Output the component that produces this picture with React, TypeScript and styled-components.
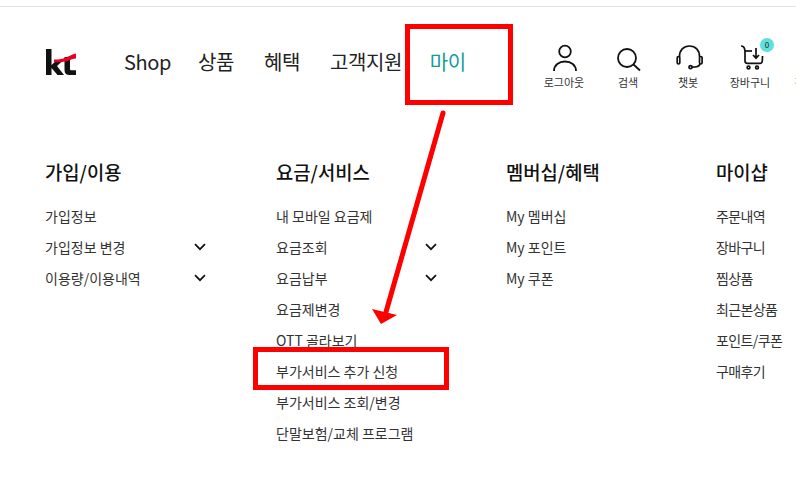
import React from "react";
import styled, { createGlobalStyle } from "styled-components";

const Global = createGlobalStyle`
  html, body { margin: 0; padding: 0; background: #fff; }
  body { font-family: "Noto Sans CJK KR", "Noto Sans", sans-serif; color: #222; }
  a { color: inherit; text-decoration: none; }
  ul { list-style: none; margin: 0; padding: 0; }
`;

const Page = styled.div`
  position: relative;
  width: 796px;
  height: 497px;
  overflow: hidden;
  background: #fff;
`;
const TopStrip = styled.div`
  height: 6px;
  border-bottom: 1px solid #e2e2e2;
`;
const Header = styled.header`
  display: flex;
  align-items: flex-start;
  height: 150px;
  padding-left: 45px;
  white-space: nowrap;
`;
const Logo = styled.svg`
  width: 32px;
  height: 26px;
  margin-top: 42px;
  flex: none;
`;
const Nav = styled.nav`
  display: flex;
  margin-left: 47px;
  margin-top: 36px;
`;
const NavLink = styled.a<{ $active?: boolean; $gap: number }>`
  font-size: 20px;
  line-height: 38px;
  font-weight: 400;
  letter-spacing: -0.4px;
  margin-right: ${(p) => p.$gap}px;
  color: ${(p) => (p.$active ? "#0f9e96" : "#222")};
`;
const Tools = styled.div`
  position: absolute;
  top: 42px;
  left: 534px;
  display: flex;
`;
const Tool = styled.a<{ $w: number }>`
  position: relative;
  width: ${(p) => p.$w}px;
  display: flex;
  flex-direction: column;
  align-items: center;
  flex: none;
  font-size: 11px;
  line-height: 16px;
  color: #333;
  svg { display: block; width: 32px; height: 32px; flex: none; }
`;
const IconSpacer = styled.span`
  height: 32px;
`;
const Badge = styled.span`
  position: absolute;
  top: -4px;
  left: 46px;
  width: 14px;
  height: 14px;
  border-radius: 50%;
  background: #5fe0dc;
  color: #222;
  font-size: 8px;
  line-height: 14px;
  text-align: center;
`;
const Menu = styled.main`
  display: grid;
  grid-template-columns: 231px 230px 210px 1fr;
  padding-left: 45px;
  white-space: nowrap;
`;
const Column = styled.section``;
const Heading = styled.h3`
  margin: 0 0 13px;
  font-size: 18.8px;
  line-height: 30px;
  font-weight: 500;
  color: #111;
`;
const Row = styled.li<{ $tight?: boolean }>`
  display: flex;
  align-items: center;
  justify-content: space-between;
  width: 161px;
  height: 31px;
  font-size: 14px;
  color: #333;
  letter-spacing: ${(p) => (p.$tight ? "-0.6px" : "0")};
`;
const Chevron = styled.svg`
  width: 12px;
  height: 8px;
  flex: none;
`;
const RedBox = styled.div<{ $l: number; $t: number; $w: number; $h: number }>`
  position: absolute;
  left: ${(p) => p.$l}px;
  top: ${(p) => p.$t}px;
  width: ${(p) => p.$w}px;
  height: ${(p) => p.$h}px;
  box-sizing: border-box;
  border: 5px solid #fe0000;
`;
const ArrowLayer = styled.svg`
  position: absolute;
  left: 0;
  top: 0;
  width: 796px;
  height: 497px;
  pointer-events: none;
`;

const Down = () => (
  <Chevron viewBox="0 0 12 8" fill="none" stroke="#111" strokeWidth="1.7">
    <path d="M1 1.2 6 6.2l5-5" />
  </Chevron>
);

const columns = [
  { title: "가입/이용", items: [["가입정보"], ["가입정보 변경", 1], ["이용량/이용내역", 1]] },
  {
    title: "요금/서비스",
    items: [
      ["내 모바일 요금제"], ["요금조회", 1], ["요금납부", 1], ["요금제변경"], ["OTT 골라보기"],
      ["부가서비스 추가 신청"], ["부가서비스 조회/변경"], ["단말보험/교체 프로그램"],
    ],
  },
  { title: "멤버십/혜택", items: [["My 멤버십"], ["My 포인트"], ["My 쿠폰"]] },
  { title: "마이샵", tight: true, items: [["주문내역"], ["장바구니"], ["찜상품"], ["최근본상품"], ["포인트/쿠폰"], ["구매후기"]] },
] as { title: string; tight?: boolean; items: [string, number?][] }[];

export default function App() {
  return (
    <Page>
      <Global />
      <TopStrip />
      <Header>
        <Logo viewBox="0 0 32 26">
          <path fill="#111" d="M1 0h5.500v16l5-4.500h6.500l-6 5.500 7 9h-6.500l-6-7V26H1z" />
          <path fill="#111" d="M19.500 8H25v12c0 .8.5 1.300 1.300 1.300H31V26h-6.500c-3.300 0-5-1.700-5-5z" />
          <path fill="#e60023" d="M9 10.500c5.500 0 9-.6 13-2.500 3-1.400 6-3 9-3.500v5c-3 .3-5 1.200-8 2.200-4 1.300-8 1.800-14 1.300z" />
        </Logo>
        <Nav>
          <NavLink $gap={27}>Shop</NavLink>
          <NavLink $gap={30}>상품</NavLink>
          <NavLink $gap={30}>혜택</NavLink>
          <NavLink $gap={27.8}>고객지원</NavLink>
          <NavLink $active $gap={0}>마이</NavLink>
        </Nav>
        <Tools>
          <Tool $w={60}>
            <svg viewBox="0 0 32 32" fill="none" stroke="#111" strokeWidth="1.800">
              <circle cx="17" cy="9.500" r="5.800" />
              <path d="M6 29c0-6 5-9.500 11-9.500s11 3.500 11 9.500" />
            </svg>
            로그아웃
          </Tool>
          <Tool $w={68}>
            <svg viewBox="0 0 32 32" fill="none" stroke="#111" strokeWidth="1.800">
              <circle cx="15" cy="16" r="9" />
              <path d="m21.500 22.500 6.500 6" />
            </svg>
            검색
          </Tool>
          <Tool $w={52}>
            <svg viewBox="0 0 32 32" fill="none" stroke="#111" strokeWidth="1.700">
              <path d="M7.500 15v-.5C7.500 8 11.500 4 17.500 4s10 4 10 10.500v.5" />
              <rect x="5.200" y="14.500" width="2.600" height="7.500" rx="1.300" />
              <rect x="27.500" y="14.500" width="2.600" height="7.500" rx="1.300" />
              <path d="M28 22c-.5 2-3 3.200-8 3.200" />
              <circle cx="18.500" cy="25.200" r="1.500" />
            </svg>
            챗봇
          </Tool>
          <Tool $w={72}>
            <svg viewBox="0 0 32 32" fill="none" stroke="#111" strokeWidth="1.700">
              <path d="M7 4c2 0 3 .8 3.500 2.500l.5 2.500v10c0 1.500 1 2.300 2.300 2.300H26c1.300 0 2.200-.8 2.300-2.300l.2-5" />
              <path d="M11 9h7" />
              <path d="M22 6v10M19 13l3 3.200 3-3.200" />
              <circle cx="14.500" cy="25.500" r="1.400" />
              <circle cx="23" cy="25.500" r="1.400" />
            </svg>
            장바구니
            <Badge>0</Badge>
          </Tool>
          <Tool $w={58}>
            <IconSpacer />
            전체메뉴
          </Tool>
        </Tools>
      </Header>
      <Menu>
        {columns.map((c) => (
          <Column key={c.title}>
            <Heading>{c.title}</Heading>
            <ul>
              {c.items.map(([label, more]) => (
                <Row key={label} $tight={c.tight}>
                  {label}
                  {more ? <Down /> : null}
                </Row>
              ))}
            </ul>
          </Column>
        ))}
      </Menu>
      <RedBox $l={405} $t={24} $w={108} $h={81} />
      <RedBox $l={253} $t={347} $w={196} $h={43} />
      <ArrowLayer viewBox="0 0 796 497">
        <path d="M443 113 386 312" stroke="#fe0000" strokeWidth="5" strokeLinecap="round" fill="none" />
        <path d="M372 309 397 315 381 324z" fill="#fe0000" />
      </ArrowLayer>
    </Page>
  );
}
